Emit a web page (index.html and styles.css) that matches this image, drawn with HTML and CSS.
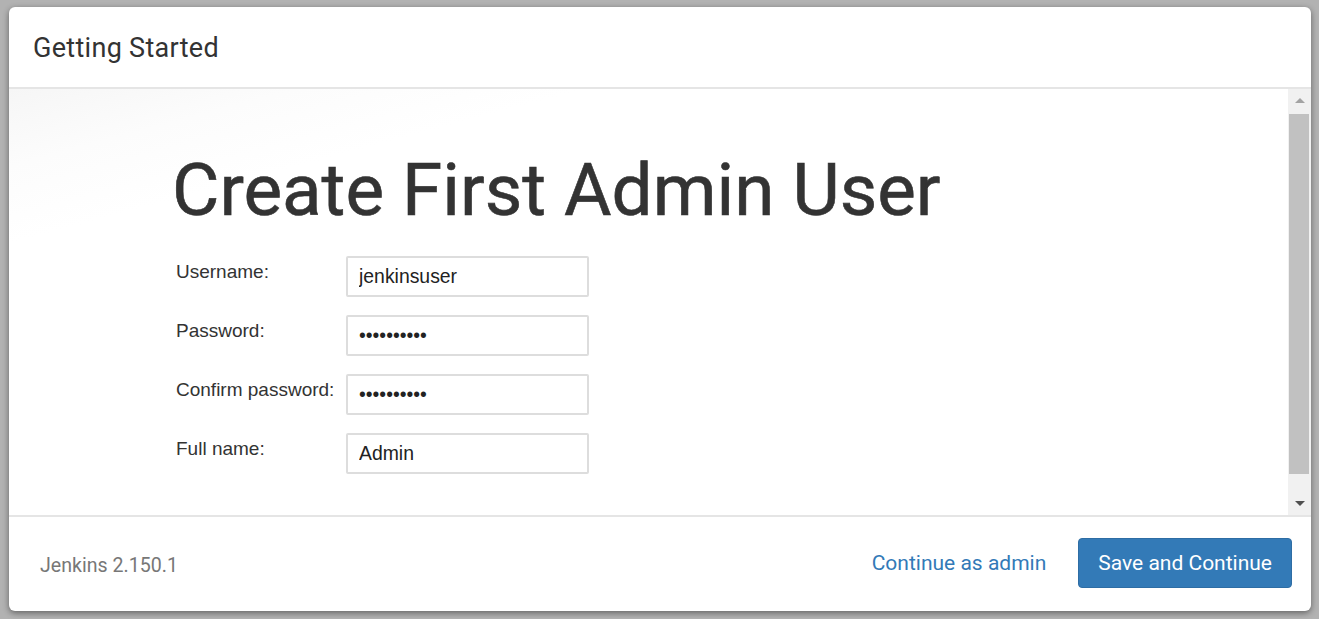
FILE: index.html
```html
<!DOCTYPE html>
<html>
<head>
<meta charset="utf-8">
<link rel="stylesheet" href="styles.css">
<title>Getting Started</title>
</head>
<body>
<div class="modal">
  <div class="modal-header">
    <h4 class="modal-title">Getting Started</h4>
  </div>
  <div class="modal-body">
    <div class="content">
      <h1 class="title">Create First Admin User</h1>
      <form class="form">
        <div class="row"><label class="label">Username:</label><input class="field" type="text" value="jenkinsuser"></div>
        <div class="row"><label class="label">Password:</label><input class="field" type="password" value="jenkinsuse"></div>
        <div class="row"><label class="label">Confirm password:</label><input class="field" type="password" value="jenkinsuse"></div>
        <div class="row"><label class="label">Full name:</label><input class="field" type="text" value="Admin"></div>
      </form>
    </div>
    <div class="scrollbar">
      <div class="arrow up"></div>
      <div class="track"><div class="thumb"></div></div>
      <div class="arrow down"></div>
    </div>
  </div>
  <div class="modal-footer">
    <div class="version">Jenkins 2.150.1</div>
    <div class="actions">
      <a class="link" href="#">Continue as admin</a>
      <button class="btn" type="button">Save and Continue</button>
    </div>
  </div>
</div>
</body>
</html>
```

FILE: styles.css
```css
* { box-sizing: border-box; }
html, body { margin: 0; height: 100%; }
body {
  background: #b2b2b2;
  padding: 7px 8px 8px 9px;
  font-family: Roboto, "Liberation Sans", sans-serif;
  overflow: hidden;
}
.modal {
  width: 1302px;
  height: 604px;
  background: #fff;
  border-radius: 6px;
  box-shadow: 0 2px 6px rgba(0,0,0,0.45);
  display: flex;
  flex-direction: column;
  overflow: hidden;
}
.modal-header {
  height: 82px;
  padding: 0 24px;
  display: flex;
  align-items: center;
  border-bottom: 2px solid #e5e5e5;
  flex: none;
}
.modal-title {
  margin: 0;
  font-size: 27px;
  font-weight: 400;
  color: #333;
  padding-top: 2px;
  letter-spacing: 0.3px;
}
.modal-body {
  flex: 1;
  display: flex;
  min-height: 0;
  background: linear-gradient(165deg, #f6f6f6 0%, #fcfcfc 10%, #fff 20%, #fff 100%);
}
.content {
  flex: 1;
  padding: 65px 0 0 163px;
}
.title {
  margin: 0 0 29px 0;
  font-size: 72.8px;
  font-weight: 400;
  color: #333;
  line-height: 1;
  -webkit-text-stroke: 0.6px #333;
}
.form {
  display: flex;
  flex-direction: column;
  gap: 18px;
  padding-left: 4px;
}
.row {
  display: flex;
  align-items: flex-start;
}
.label {
  width: 170px;
  font-family: "Liberation Sans", Arial, sans-serif;
  font-size: 19px;
  color: #333;
  padding-top: 5px;
}
.field {
  width: 243px;
  height: 41px;
  border: 2px solid #ddd;
  border-radius: 2px;
  padding: 0 11px;
  font-family: "Liberation Sans", Arial, sans-serif;
  font-size: 19.4px;
  color: #222;
  background: #fff;
  outline: none;
}
.scrollbar {
  width: 23px;
  background: #f1f1f1;
  display: flex;
  flex-direction: column;
  flex: none;
}
.arrow {
  height: 24px;
  position: relative;
  flex: none;
}
.arrow::after {
  content: "";
  position: absolute;
  left: 7px;
  width: 0; height: 0;
  border-left: 5px solid transparent;
  border-right: 5px solid transparent;
}
.arrow.up::after { top: 9px; border-bottom: 5px solid #a3a3a3; }
.arrow.down::after { top: 10px; border-top: 5px solid #505050; }
.track {
  flex: 1;
  padding: 1px 2px 1px 1px;
}
.thumb {
  height: 360px;
  background: #c1c1c1;
}
.modal-footer {
  height: 96px;
  border-top: 2px solid #e5e5e5;
  display: flex;
  align-items: center;
  justify-content: space-between;
  padding: 0 19px 0 31px;
  flex: none;
}
.version {
  font-size: 19.6px;
  color: #777;
  padding-top: 2px;
}
.actions {
  display: flex;
  align-items: center;
  gap: 32px;
}
.link {
  font-size: 21px;
  color: #337ab7;
  text-decoration: none;
  padding-bottom: 2px;
}
.btn {
  height: 50px;
  padding: 0 19px;
  font-family: Roboto, "Liberation Sans", sans-serif;
  font-size: 21px;
  color: #fff;
  background: #337ab7;
  border: 1px solid #2e6da4;
  border-radius: 4px;
  margin-bottom: 2px;
}
```
